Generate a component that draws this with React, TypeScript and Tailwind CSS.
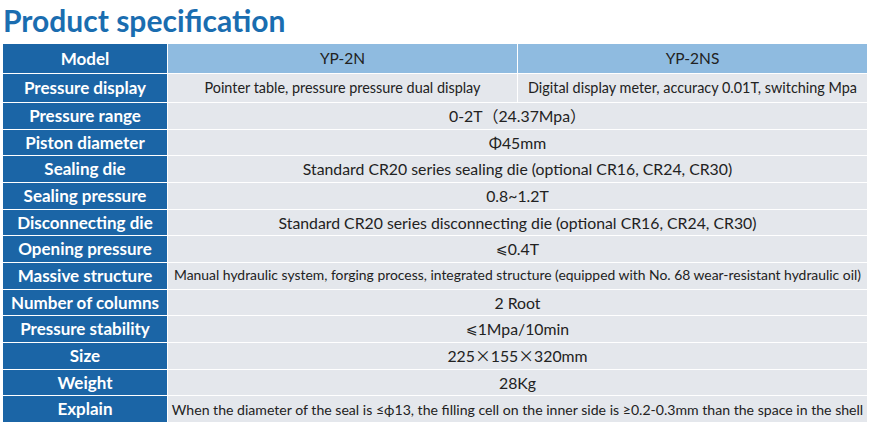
import React from "react";

const cjk = "font-['Noto_Sans_CJK_SC',sans-serif]";
const dv = "font-['DejaVu_Sans',sans-serif] text-[14px]";

const rows: [string, React.ReactNode, string][] = [
  ["Pressure range", <>0-2T<span className={cjk}>（</span>24.37Mpa<span className={cjk}>）</span></>, "text-[15.8px]"],
  ["Piston diameter", "Φ45mm", "text-[15.8px]"],
  ["Sealing die", "Standard CR20 series sealing die (optional CR16, CR24, CR30)", "text-[15.8px]"],
  ["Sealing pressure", "0.8~1.2T", "text-[15.8px]"],
  ["Disconnecting die", "Standard CR20 series disconnecting die (optional CR16, CR24, CR30)", "text-[15.8px]"],
  ["Opening pressure", <><span className={dv}>⩽</span>0.4T</>, "text-[15.8px]"],
  ["Massive structure", "Manual hydraulic system, forging process, integrated structure (equipped with No. 68 wear-resistant hydraulic oil)", "text-[13.9px]"],
  ["Number of columns", "2 Root", "text-[15.8px]"],
  ["Pressure stability", <><span className={dv}>⩽</span>1Mpa/10min</>, "text-[15.8px]"],
  ["Size", <>225<span className={cjk}>×</span>155<span className={cjk}>×</span>320mm</>, "text-[15.8px]"],
  ["Weight", "28Kg", "text-[15.8px]"],
  ["Explain", "When the diameter of the seal is ≤ϕ13, the filling cell on the inner side is ≥0.2-0.3mm than the space in the shell", "text-[14.1px]"],
];

export default function App() {
  return (
    <div className="w-[875px] h-[429px] bg-white overflow-hidden font-['Lato','Noto_Sans_CJK_SC',sans-serif]">
      <h1 className="pl-[3px] pt-[2px] h-[42px] text-[30px] leading-[36px] font-bold text-[#1a6db0]">Product specification</h1>
      <div className="mt-[2px] ml-[3px] w-[864px] h-[378px] grid grid-cols-[164px_349px_1fr] grid-rows-[29px_28px_repeat(12,1fr)] gap-[1px] bg-white">
        <div className="bg-[#1b65a6] text-white font-bold text-[17px] flex items-center justify-center">Model</div>
        <div className="bg-[#8fbbe0] text-[#222] text-[15.5px] flex items-center justify-center">YP-2N</div>
        <div className="bg-[#8fbbe0] text-[#222] text-[15.5px] flex items-center justify-center">YP-2NS</div>
        <div className="bg-[#1b65a6] text-white font-bold text-[17px] flex items-center justify-center">Pressure display</div>
        <div className="bg-[#e4e7ec] text-[#222] text-[14.4px] flex items-center justify-center whitespace-nowrap">Pointer table, pressure pressure dual display</div>
        <div className="bg-[#e4e7ec] text-[#222] text-[14.4px] flex items-center justify-center whitespace-nowrap">Digital display meter, accuracy 0.01T, switching Mpa</div>
        {rows.map(([k, v, size]) => (
          <React.Fragment key={k}>
            <div className="bg-[#1b65a6] text-white font-bold text-[17px] flex items-center justify-center whitespace-nowrap">{k}</div>
            <div className={`col-span-2 bg-[#e4e7ec] text-[#222] flex items-center justify-center whitespace-nowrap ${size}`}>{v}</div>
          </React.Fragment>
        ))}
      </div>
    </div>
  );
}
